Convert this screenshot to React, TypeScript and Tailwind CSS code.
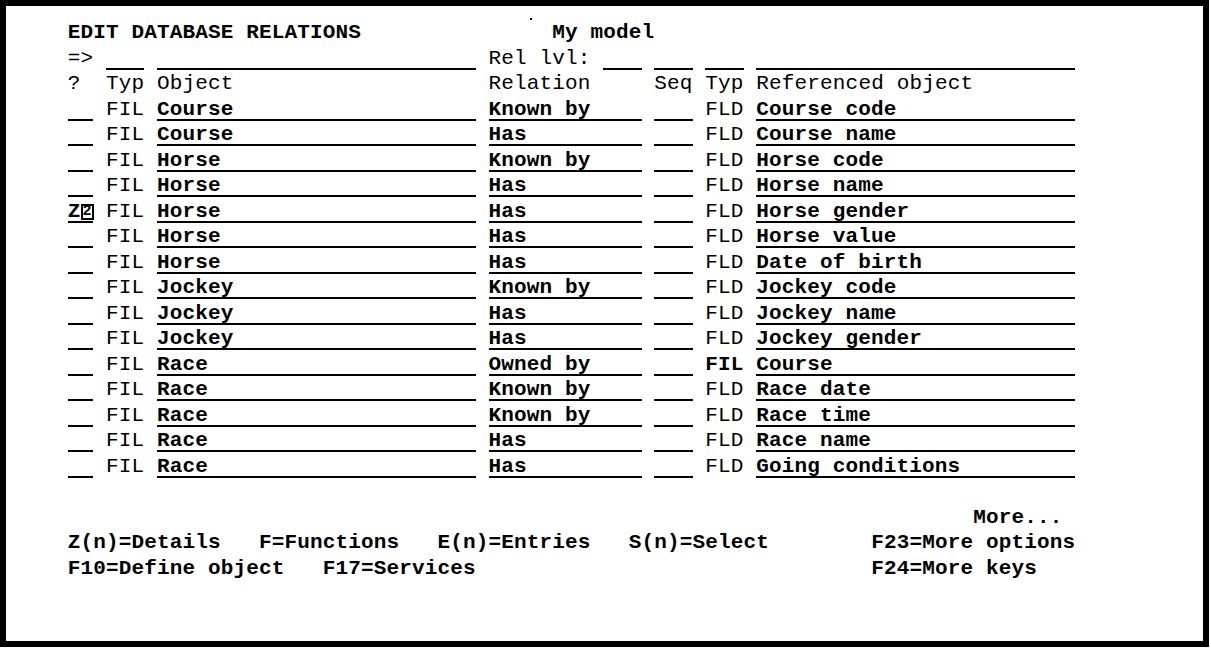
import type { ReactNode } from "react";

// widths of the input fields, in terminal columns (12.75px each)
const fieldWidth: Record<number, string> = {
    2: "w-[25.5px]",
    3: "w-[38.25px]",
    12: "w-[153px]",
    25: "w-[318.75px]",
};

const relations = [
    { obj: "Course", rel: "Known by", typ: "FLD", ref: "Course code" },
    { obj: "Course", rel: "Has", typ: "FLD", ref: "Course name" },
    { obj: "Horse", rel: "Known by", typ: "FLD", ref: "Horse code" },
    { obj: "Horse", rel: "Has", typ: "FLD", ref: "Horse name" },
    { obj: "Horse", rel: "Has", typ: "FLD", ref: "Horse gender", cursor: true },
    { obj: "Horse", rel: "Has", typ: "FLD", ref: "Horse value" },
    { obj: "Horse", rel: "Has", typ: "FLD", ref: "Date of birth" },
    { obj: "Jockey", rel: "Known by", typ: "FLD", ref: "Jockey code" },
    { obj: "Jockey", rel: "Has", typ: "FLD", ref: "Jockey name" },
    { obj: "Jockey", rel: "Has", typ: "FLD", ref: "Jockey gender" },
    { obj: "Race", rel: "Owned by", typ: "FIL", ref: "Course" },
    { obj: "Race", rel: "Known by", typ: "FLD", ref: "Race date" },
    { obj: "Race", rel: "Known by", typ: "FLD", ref: "Race time" },
    { obj: "Race", rel: "Has", typ: "FLD", ref: "Race name" },
    { obj: "Race", rel: "Has", typ: "FLD", ref: "Going conditions" },
];

function Row({ children }: { children?: ReactNode }) {
    return <div className="flex h-[25.5px] items-start whitespace-pre leading-[25.5px]">{children}</div>;
}

function Field({ size, children }: { size: number; children?: ReactNode }) {
    return (
        <div className={`${fieldWidth[size]} flex h-[24px] shrink-0 border-b-2 border-black font-bold`}>
            {children}
        </div>
    );
}

export default function App() {
    return (
        <div className="h-[650px] w-[1211px] bg-white">
            <div className="relative h-[647px] w-[1209px] border-[6px] border-black pl-[61.75px] pt-[14.25px] font-['Liberation_Mono',monospace] text-[21px] tracking-[0.15px] text-black">
                <div className="absolute left-[524px] top-[12px] h-[2px] w-[2px] bg-black"></div>

                {/* Header */}
                <Row>
                    <span className="font-bold">EDIT DATABASE RELATIONS</span>
                    <span>{"               "}</span>
                    <span className="font-bold">My model</span>
                </Row>
                <Row>
                    <span>{"=> "}</span>
                    <Field size={3} />
                    <span> </span>
                    <Field size={25} />
                    <span>{" Rel lvl: "}</span>
                    <Field size={3} />
                    <span> </span>
                    <Field size={3} />
                    <span> </span>
                    <Field size={3} />
                    <span> </span>
                    <Field size={25} />
                </Row>
                <Row>
                    <span>{"?  Typ Object                    Relation     Seq Typ Referenced object"}</span>
                </Row>

                {/* Relations */}
                {relations.map((r, i) => (
                    <Row key={i}>
                        <Field size={2}>
                            {r.cursor && (
                                <>
                                    <span>Z</span>
                                    <span className="mt-[5px] flex h-[16px] w-[13px] items-center justify-center border-2 border-black text-[15px] leading-none">
                                        2
                                    </span>
                                </>
                            )}
                        </Field>
                        <span>{" FIL "}</span>
                        <Field size={25}>{r.obj}</Field>
                        <span> </span>
                        <Field size={12}>{r.rel}</Field>
                        <span> </span>
                        <Field size={3} />
                        <span> </span>
                        <span className={r.typ === "FIL" ? "font-bold" : ""}>{r.typ}</span>
                        <span> </span>
                        <Field size={25}>{r.ref}</Field>
                    </Row>
                ))}
                <Row />

                {/* Command keys */}
                <div className="font-bold">
                    <Row>
                        <span>{" ".repeat(71)}More...</span>
                    </Row>
                    <Row>
                        <span>{"Z(n)=Details   F=Functions   E(n)=Entries   S(n)=Select        F23=More options"}</span>
                    </Row>
                    <Row>
                        <span>{"F10=Define object   F17=Services                               F24=More keys"}</span>
                    </Row>
                </div>
            </div>
        </div>
    );
}
